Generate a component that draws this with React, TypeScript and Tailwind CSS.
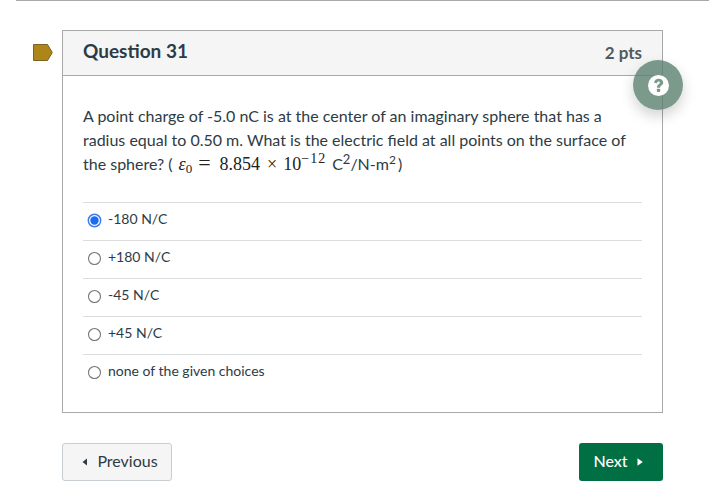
import React from "react";

const choices = ["-180 N/C", "+180 N/C", "-45 N/C", "+45 N/C", "none of the given choices"];

const Radio = ({checked}: {checked: boolean}) => (
    <svg width="15" height="15" viewBox="0 0 15 15" className="shrink-0">
        {checked ? (
            <>
                <circle cx="7.5" cy="7.5" r="6.2" fill="#fff" stroke="#3a7df0" strokeWidth="1.5"/>
                <circle cx="7.5" cy="7.5" r="4.2" fill="#1a6cf0"/>
            </>
        ) : (
            <circle cx="7.5" cy="7.5" r="6" fill="#fff" stroke="#767676" strokeWidth="1.1"/>
        )}
    </svg>
);

const App = () => {
    return (
        <div className="relative h-[500px] w-[721px] overflow-hidden bg-white text-[#2d3b45]"
             style={{fontFamily: "Lato, sans-serif"}}>
            <div className="ml-4 h-px w-[693px] bg-[#a9a9a9]"/>

            <div className="mt-[29px] flex flex-row pl-[33px]">
                <svg width="20" height="17" viewBox="0 0 20 17" className="mt-[14px] shrink-0">
                    <path d="M0.5 0.5H14.5L19.3 8.5L14.5 16.5H0.5Z" fill="#ae8518" stroke="#7c6220"/>
                </svg>

                <div className="ml-[9px] flex h-[383px] w-[601px] flex-col border border-[#a9a9a9]">
                    <div className="flex h-[45px] shrink-0 items-center justify-between border-b border-[#a9a9a9] bg-[#f5f5f5] px-[20px]">
                        <span className="pb-[3px] text-[19px] font-bold">Question 31</span>
                        <span className="pb-[1px] text-[17px] font-bold text-[#4f5a62]">2 pts</span>
                    </div>

                    <div className="px-[20px] pt-[28px]">
                        <p className="text-[16px] leading-[24px]">
                            A point charge of -5.0 nC is at the center of an imaginary sphere that has a
                            radius equal to 0.50 m. What is the electric field at all points on the surface of
                            the sphere? (
                            <span className="ml-[6px] inline-block h-[24px] text-[18px] leading-[24px] text-[#222]" style={{fontFamily: "'Liberation Serif', serif"}}>
                                <i>ε</i><sub className="text-[13px] leading-none">0</sub>
                                <span className="ml-[6px] mr-[9px] text-[22px] leading-none">=</span>8.854<span className="ml-[7px] mr-[6px]">×</span>10<sup className="text-[14px] leading-none tracking-[1px]">−12</sup>
                            </span>
                            <span className="ml-[6px]">C<sup className="text-[13px] leading-none">2</sup>/N-m<sup className="text-[12px] leading-none">2</sup></span>
                            <span className="ml-[2px]">)</span>
                        </p>

                        <div className="mt-[26px]">
                            {choices.map((choice, i) => (
                                <div key={choice} className="flex h-[38px] items-center border-t border-[#dadcde] pl-[4px]">
                                    <div className="flex pb-[2px]"><Radio checked={i === 0}/></div>
                                    <span className="ml-[6px] pb-[6px] text-[14px]">{choice}</span>
                                </div>
                            ))}
                        </div>
                    </div>
                </div>
            </div>

            <div className="absolute left-[633px] top-[60px] flex h-[50px] w-[50px] items-center justify-center rounded-full bg-[#5a816f]/80 shadow-[0_6px_14px_rgba(0,0,0,0.18)]">
                <svg width="21" height="21" viewBox="0 0 20 20">
                    <circle cx="10" cy="10" r="10" fill="#fff"/>
                    <path d="M5.8 7.4C6 4.9 7.9 3.6 10.2 3.6C12.6 3.6 14.5 5 14.5 7.2C14.5 10 11.7 9.9 11.5 12.1H8.5C8.5 8.9 11.3 8.9 11.3 7.4C11.3 6.7 10.8 6.2 10 6.2C9.2 6.2 8.7 6.8 8.6 7.8Z" fill="#7b9a8c"/>
                    <rect x="8.5" y="13.1" width="3" height="3" rx="0.4" fill="#7b9a8c"/>
                </svg>
            </div>

            <div className="ml-[62px] mt-[30px] flex w-[601px] flex-row justify-between">
                <button className="flex h-[38px] w-[110px] items-center justify-center rounded-[3px] border border-[#c7cdd1] bg-[#f5f5f5] pb-[2px] pl-[6px] text-[16px]">
                    <svg width="6" height="8" viewBox="0 0 6 8" className="mr-[9px] mt-[2px]">
                        <path d="M5 0.5V7.5L0.5 4Z" fill="#2d3b45"/>
                    </svg>
                    Previous
                </button>
                <button className="flex h-[38px] w-[84px] items-center justify-center rounded-[3px] bg-[#006f43] pb-[2px] pr-[6px] text-[16px] font-medium text-white">
                    Next
                    <svg width="6" height="8" viewBox="0 0 6 8" className="ml-[9px] mt-[2px]">
                        <path d="M0.5 0.2V7.8L5.8 4Z" fill="#fff"/>
                    </svg>
                </button>
            </div>
        </div>
    );
};

export default App;
